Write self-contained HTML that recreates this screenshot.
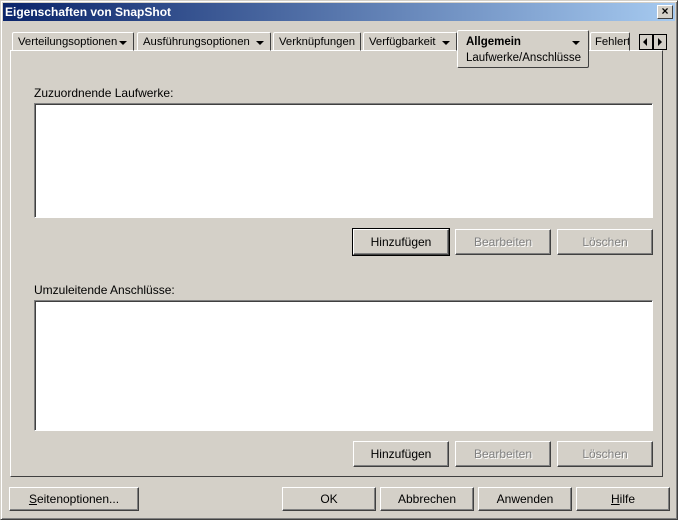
<!DOCTYPE html><html><head><style>
*{box-sizing:border-box;margin:0;padding:0}
body{width:678px;height:520px;background:#d4d0c8;font:12px "Liberation Sans",Arial,sans-serif;position:relative;overflow:hidden;color:#000}
.a{position:absolute}
.win{left:0;top:0;width:678px;height:520px;border:1px solid;border-color:#d4d0c8 #404040 #404040 #d4d0c8;box-shadow:inset 1px 1px #fff,inset -1px -1px #808080}
.title{left:3px;top:3px;width:672px;height:18px;background:linear-gradient(90deg,#0a246a,#a6caf0);color:#fff;font-weight:bold;font-size:12px;line-height:18px;padding-left:2px}
.x{right:5px;top:5px;width:16px;height:14px;background:#d4d0c8;border:1px solid;border-color:#fff #404040 #404040 #fff;font-size:12px;line-height:11px;text-align:center;color:#000;font-weight:bold}
.tab{top:32px;height:19px;border:1px solid;border-color:#fff #404040 transparent #fff;border-radius:2px 2px 0 0;line-height:19px;padding-left:5px;white-space:nowrap;font-size:11.3px;overflow:hidden}
.arr{position:absolute;right:6px;top:8px;width:0;height:0;border-left:4px solid transparent;border-right:4px solid transparent;border-top:4px solid #000}
.panel{left:10px;top:50px;width:653px;height:427px;border:1px solid;border-color:#fff #404040 #404040 #fff}
.list{background:#fff;border:1px solid;border-color:#808080 #fff #fff #808080;box-shadow:inset 1px 1px #404040}
.btn{height:26px;border:1px solid;border-color:#fff #404040 #404040 #fff;box-shadow:inset -1px -1px #808080;text-align:center;line-height:24px}
.dis{color:#808080;text-shadow:1px 1px #fff}
.def{outline:1px solid #000}
</style></head><body>
<div class="a win"></div>
<div class="a title">Eigenschaften von SnapShot</div>
<div class="a x">×</div>
<div class="a panel"></div>
<div class="a tab" style="left:12px;width:122px">Verteilungsoptionen<span class="arr"></span></div>
<div class="a tab" style="left:137px;width:134px">Ausführungsoptionen<span class="arr"></span></div>
<div class="a tab" style="left:273px;width:88px">Verknüpfungen</div>
<div class="a tab" style="left:363px;width:94px">Verfügbarkeit<span class="arr"></span></div>
<div class="a" style="left:457px;top:30px;width:132px;height:38px;border:1px solid;border-color:#fff #404040 #404040 #fff;border-radius:2px;background:#d4d0c8;padding:3px 0 0 8px;line-height:16px;font-size:11.5px"><b>Allgemein</b><span class="arr" style="right:8px;top:10px"></span><br>Laufwerke/Anschlüsse</div>
<div class="a tab" style="left:590px;width:40px;padding-left:4px">Fehlert</div>
<div class="a" style="left:639px;top:34px;width:14px;height:16px;border:1px solid #000;background:#d4d0c8"><span class="a" style="left:3px;top:3px;border-top:4px solid transparent;border-bottom:4px solid transparent;border-right:4px solid #000"></span></div>
<div class="a" style="left:653px;top:34px;width:14px;height:16px;border:1px solid #000;background:#d4d0c8"><span class="a" style="left:4px;top:3px;border-top:4px solid transparent;border-bottom:4px solid transparent;border-left:4px solid #000"></span></div>
<div class="a" style="left:34px;top:86px">Zuzuordnende Laufwerke:</div>
<div class="a list" style="left:34px;top:103px;width:619px;height:115px"></div>
<div class="a btn def" style="left:353px;top:229px;width:96px">Hinzufügen</div>
<div class="a btn dis" style="left:455px;top:229px;width:96px">Bearbeiten</div>
<div class="a btn dis" style="left:557px;top:229px;width:96px">Löschen</div>
<div class="a" style="left:34px;top:283px">Umzuleitende Anschlüsse:</div>
<div class="a list" style="left:34px;top:300px;width:619px;height:131px"></div>
<div class="a btn" style="left:353px;top:441px;width:96px">Hinzufügen</div>
<div class="a btn dis" style="left:455px;top:441px;width:96px">Bearbeiten</div>
<div class="a btn dis" style="left:557px;top:441px;width:96px">Löschen</div>
<div class="a btn" style="left:9px;top:487px;width:130px;height:24px;line-height:22px"><u>S</u>eitenoptionen...</div>
<div class="a btn" style="left:282px;top:487px;width:94px;height:24px;line-height:22px">OK</div>
<div class="a btn" style="left:380px;top:487px;width:94px;height:24px;line-height:22px">Abbrechen</div>
<div class="a btn" style="left:478px;top:487px;width:94px;height:24px;line-height:22px">Anwenden</div>
<div class="a btn" style="left:576px;top:487px;width:94px;height:24px;line-height:22px"><u>H</u>ilfe</div>
</body></html>
